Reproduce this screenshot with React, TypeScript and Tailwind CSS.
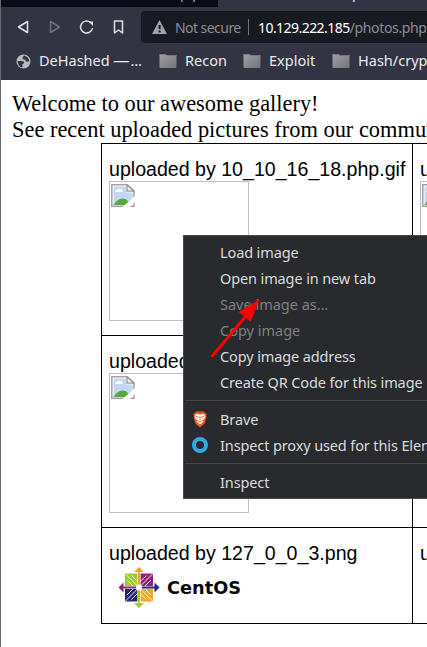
import React from "react";

function Folder() {
  return (
    <svg width="18" height="16" viewBox="0 0 18 16" className="shrink-0">
      <defs>
        <linearGradient id="folder" x1="0" y1="0" x2="1" y2="1">
          <stop offset="0" stopColor="#a0a0a5" />
          <stop offset="1" stopColor="#747478" />
        </linearGradient>
      </defs>
      <path d="M.5 3V1.5Q.5 1 1 1h5.5l1 1H17q.5 0 .5.5V14q0 1-1 1h-15q-1 0-1-1z" fill="url(#folder)" />
      <path d="M.5 1.5h6M7.5 2.5h10" stroke="#77777d" />
    </svg>
  );
}

function BrokenIcon() {
  return (
    <svg width="24" height="23" viewBox="0 0 24 23">
      <path d="M.8.8h15.4l6.800 6v15.400H.8z" fill="#fff" stroke="#a0a0a0" strokeWidth="1.5" />
      <path d="M2.500 2.500H15v6h6.500v12.500h-19z" fill="#c5d6f6" />
      <path d="M4 8q0-2 2-2 1-2.500 3.500-1 2 0 2 3z" fill="#fff" />
      <path d="M2.500 21q4-7 10-6.500 5 1 7 6.500z" fill="#55ab37" />
      <path d="M11.500 23l12.500-11v6l-5 5z" fill="#fff" />
      <path d="M16 .8v6.400h7z" fill="#eee" stroke="#999" strokeWidth="1.300" />
    </svg>
  );
}

function BrokenImage() {
  return (
    <div className="h-[140px] w-[140px] border border-[#c0c0c0] pl-px pt-[2px]">
      <BrokenIcon />
    </div>
  );
}

function CentOS() {
  return (
    <svg width="140" height="48" viewBox="0 0 140 48" className="block">
      <g transform="translate(30 22.500)">
        <rect x="-14" y="-14" width="13.500" height="13.500" fill="#9ccd2a" />
        <rect x=".5" y="-14" width="13.500" height="13.500" fill="#932279" />
        <rect x="-14" y=".5" width="13.500" height="13.500" fill="#262577" />
        <rect x=".5" y=".5" width="13.500" height="13.500" fill="#efa724" />
        <g stroke="#fff" strokeWidth="1" strokeOpacity=".85" fill="none">
          <path d="M-14-14L14 14M14-14L-14 14" />
          <path d="M-7.500-12L0-4.500L7.500-12M-7.500 12L0 4.500L7.500 12M-12-7.500L-4.500 0L-12 7.500M12-7.500L4.500 0L12 7.500" />
        </g>
        <path d="M0-18V18M-18 0H18" stroke="#fff" strokeWidth="3.200" />
        <path d="M0-20.500l5 5H1V0h-2v-15.500h-4z" fill="#efa724" />
        <path d="M20.500 0l-5 5V1H0v-2h15.500v-4z" fill="#262577" />
        <path d="M0 20.500l-5-5h4V0h2v15.500h4z" fill="#9ccd2a" />
        <path d="M-20.500 0l5-5v4H0v2h-15.500v4z" fill="#932279" />
        <circle r="3" fill="#fff" />
      </g>
      <text x="58" y="29" textLength="74" lengthAdjust="spacingAndGlyphs" fontSize="18" fontWeight="700" fontFamily="DejaVu Sans, sans-serif" fill="#090909">CentOS</text>
    </svg>
  );
}

function Cell({ name, children }: { name: string; children: React.ReactNode }) {
  return (
    <div className="border-b border-r border-black pl-[7px] pt-[14px]">
      <div className="h-[23px] whitespace-nowrap font-['Liberation_Sans',sans-serif] text-[19.600px] leading-[23px]">{name}</div>
      {children}
    </div>
  );
}

function Brave() {
  return (
    <svg width="16" height="17" viewBox="0 0 16 17" className="-mt-[2px]">
      <path d="M4 .5h8l1 1.500 1.600.8-.5 2 .4 1-1.800 6.600L8 16.500l-4.700-4.100L1.500 5.800l.4-1-.5-2L3 2z" fill="#f15416" />
      <path d="M4 3h2l2 .6L10 3h2l1.400 2.500-.8 2-1.700 1.800.3 1.500L8 13.400l-3.200-2.600.3-1.500-1.700-1.800-.8-2z" fill="#fff" />
      <path d="M4 5.500l2.800.7M12 5.500l-2.800.7M8 5v4M5.500 9.500L8 11l2.500-1.500" stroke="#f15416" strokeWidth=".9" fill="none" />
    </svg>
  );
}

function Item({ children, disabled, icon }: { children: React.ReactNode; disabled?: boolean; icon?: React.ReactNode }) {
  return (
    <div className={"flex h-[26px] items-center whitespace-nowrap " + (disabled ? "tracking-normal text-[#7e8083]" : "text-[#d9dbde]")}>
      <span className="flex w-[36px] shrink-0 pl-[8px]">{icon}</span>
      <span>{children}</span>
    </div>
  );
}

export default function App() {
  return (
    <div className="relative h-[647px] w-[427px] overflow-hidden border-l border-[#696969] bg-white font-['Noto_Sans',sans-serif] text-black">
      <header className="h-[80px] bg-[#323443] text-[#e9eaed]">
        <div className="flex h-[7px] overflow-hidden text-[14px] leading-[14px]">
          <div className="h-[7px] w-[217px] bg-[#0b0b15] pl-[179px] text-[#aaa]"><span className="relative -top-[14px]">p p</span></div>
          <span className="relative -top-[14px] ml-[134px]">p</span>
        </div>
        <div className="flex h-[40px] items-center pl-[16px]">
          <svg width="108" height="20" viewBox="0 0 108 20" className="mr-[16px] shrink-0" fill="none" stroke="#e0e1e6" strokeWidth="1.500" strokeLinejoin="round">
            <path d="M10.500 4.500v11L1.500 10z" />
            <path d="M33.500 4.500v11l9-5.500z" stroke="#6f707d" />
            <path d="M73.500 5.500A6 6 0 1 0 75.500 11" />
            <path d="M71.500 4.500h4.500v4.500z" fill="#e0e1e6" stroke="none" />
            <path d="M97.500 4h8v12l-4-3-4 3z" />
          </svg>
          <div className="flex h-[32px] w-[300px] shrink-0 items-center rounded-l-[4px] bg-[#181a22] pl-[11px] text-[14px] tracking-[-0.550px] whitespace-nowrap">
            <svg width="15" height="14" viewBox="0 0 15 14"><path d="M7.500 0L15 14H0z" fill="#a0a2a9" /><path d="M6.600 5h2v4h-2zm0 5.500h2v2h-2z" fill="#181a22" /></svg>
            <span className="ml-[8px] w-[73px] text-[#8b8d94]">Not secure</span>
            <span className="mr-[9px] h-[16px] w-px bg-[#73757d]" />
            <span className="text-white">10.129.222.185<span className="tracking-[-0.350px] text-[#8b8d94]">/photos.php</span></span>
          </div>
        </div>
        <div className="flex h-[28px] items-center whitespace-nowrap pl-[15px] text-[14.500px]">
          <svg width="15" height="15" viewBox="0 0 15 15" className="shrink-0">
            <circle cx="7.500" cy="7.500" r="7" fill="#b9bac0" />
            <path d="M1.500 7h4.500q2 0 2 1.500t-1.500 1.500v3.500q-4-.5-5-6.500zM8.500 1.500q-2 1-2 2.500 0 1.500 3 1.500v2h3.800q-.2-4-4.800-6z" fill="#323443" />
          </svg>
          <span className="ml-[8px] w-[120px] shrink-0">DeHashed <span className="mr-[1px] inline-block w-[16px] origin-left scale-x-[1.150]">—</span>…</span>
          <Folder /><span className="ml-[8px] w-[58px] shrink-0">Recon</span>
          <Folder /><span className="ml-[8px] w-[63px] shrink-0">Exploit</span>
          <Folder /><span className="ml-[8px] shrink-0">Hash/crypt</span>
        </div>
      </header>
      <main>
        <div className="h-[63px] whitespace-nowrap pl-[11px] pt-[11px] font-['Liberation_Serif',serif] text-[22.400px] leading-[26px]">
          <div>Welcome to our awesome gallery!</div>
          <div>See recent uploaded pictures from our community</div>
        </div>
        <div className="ml-[100px] grid w-[623px] grid-cols-[311px_311px] grid-rows-[192px_192px_96px] border-l border-t border-black">
          <Cell name="uploaded by 10_10_16_18.php.gif"><BrokenImage /></Cell>
          <Cell name="uploaded by 10_10_16_17.php.gif"><BrokenImage /></Cell>
          <Cell name="uploaded by 10_10_16_16.php.gif"><BrokenImage /></Cell>
          <Cell name="uploaded by 127_0_0_4.png"><div /></Cell>
          <Cell name="uploaded by 127_0_0_3.png"><CentOS /></Cell>
          <Cell name="uploaded by 127_0_0_2.png"><CentOS /></Cell>
        </div>
      </main>
      <div className="absolute left-[182px] top-[235px] h-[264px] w-[300px] border border-[#484a4d] bg-[#292a2d] pt-[4px] text-[14.500px] tracking-[-0.120px]">
        <Item>Load image</Item>
        <Item>Open image in new tab</Item>
        <Item disabled>Save image as…</Item>
        <Item disabled>Copy image</Item>
        <Item>Copy image address</Item>
        <Item>Create QR Code for this image</Item>
        <div className="mb-[6px] ml-px mt-[4px] h-px bg-[#434548]" />
        <Item icon={<Brave />}>Brave</Item>
        <Item icon={<span className="-mt-[2px] h-[16px] w-[16px] rounded-full border-[4px] border-[#30a9e8]" />}>Inspect proxy used for this Element</Item>
        <div className="mb-[6px] ml-px mt-[4px] h-px bg-[#434548]" />
        <Item>Inspect</Item>
      </div>
      <svg className="absolute left-[209px] top-[298px]" width="52" height="60" viewBox="0 0 52 60">
        <path d="M1.500 59L36 18" stroke="#f00" strokeWidth="3" />
        <path d="M49.500 1L28.700 14l12 9.700z" fill="#f00" />
      </svg>
    </div>
  );
}
